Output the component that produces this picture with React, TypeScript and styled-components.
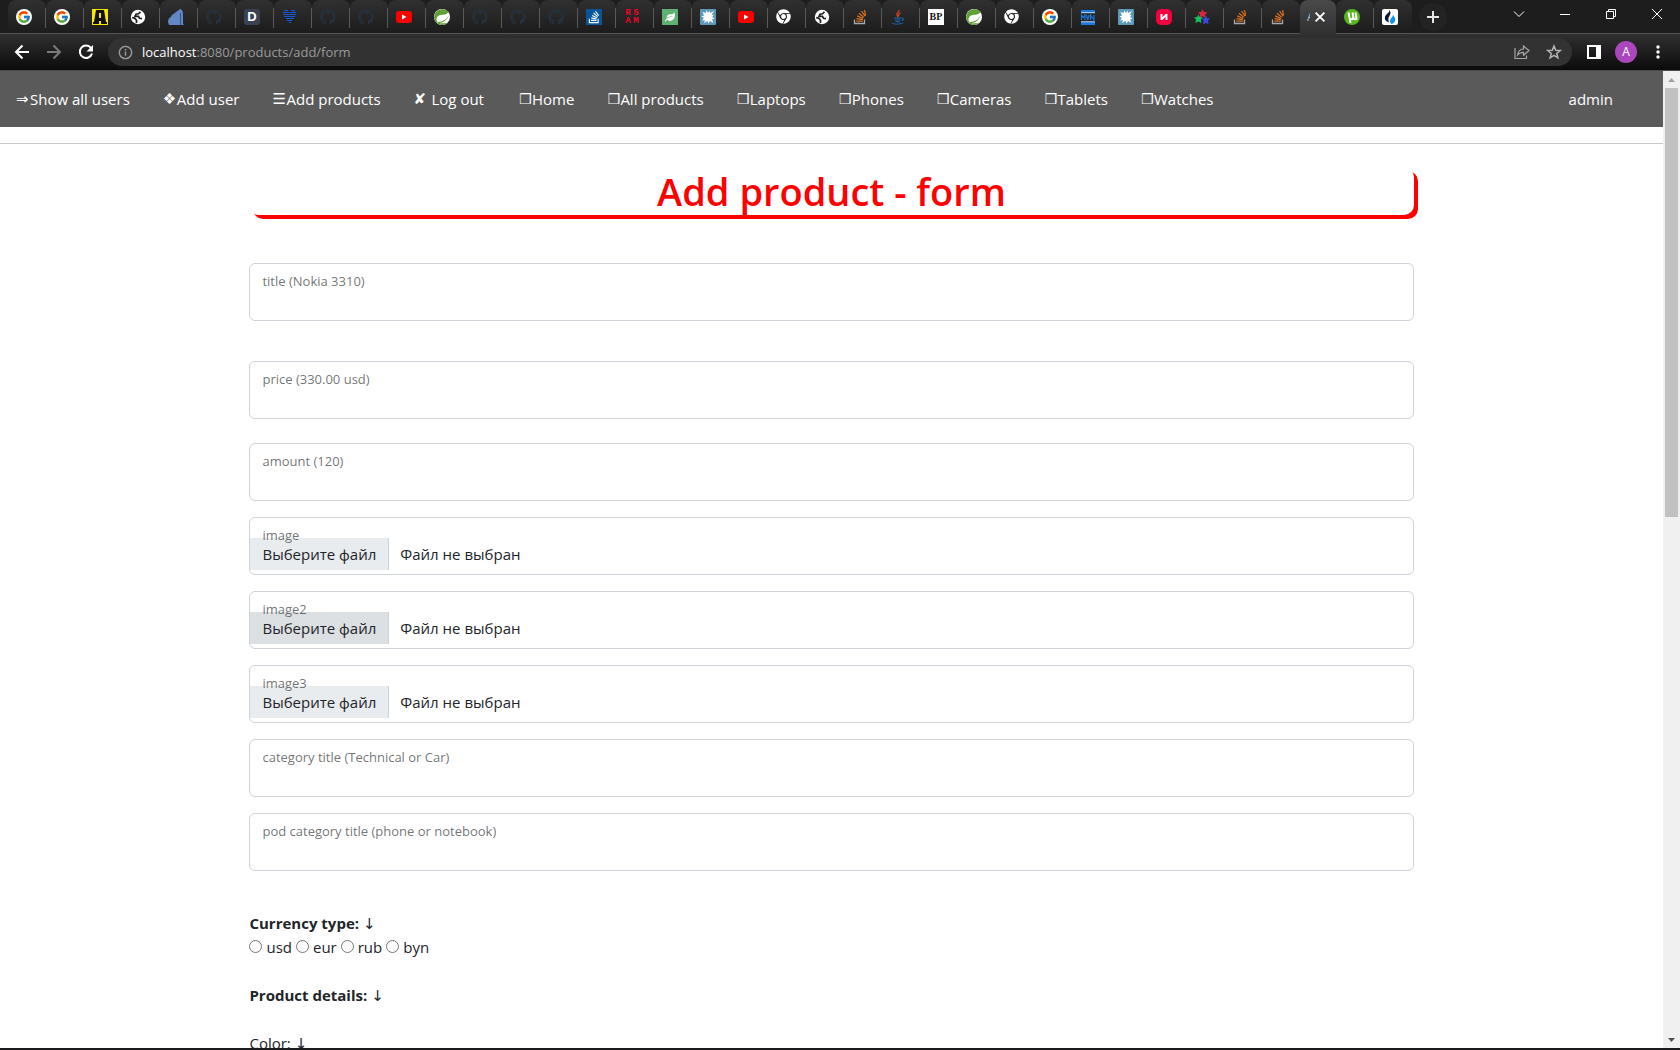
import React, { useRef, useState } from "react";
import styled, { createGlobalStyle } from "styled-components";
import { FcGoogle } from "react-icons/fc";
import { FaGithub, FaStackOverflow, FaChrome, FaLeaf } from "react-icons/fa";
import { SiSpring } from "react-icons/si";

const GlobalStyle = createGlobalStyle`
  *, *::before, *::after { box-sizing: border-box; }
  body {
    margin: 0;
    background: #fff;
    color: #212529;
    font: 400 15px/24px "Open Sans", "Noto Sans", "DejaVu Sans", sans-serif;
  }
  button, input { font: inherit; color: inherit; }
`;

/* ---------- window ---------- */

const Window = styled.div`
  display: flex;
  flex-direction: column;
  height: 100vh;
  border-bottom: 2px solid #1b1b1e;
`;

const TabStrip = styled.header`
  display: flex;
  height: 34px;
  flex: none;
  padding-left: 8px;
  background: #1d1d1d;
  border-bottom: 1px solid #545454;
`;

const Tabs = styled.div`
  display: flex;
  min-width: 0;
`;

const Tab = styled.button<{ $active?: boolean; $line?: boolean }>`
  display: flex;
  align-items: center;
  flex: none;
  width: ${(p) => (p.$active ? 36 : 38)}px;
  height: ${(p) => (p.$active ? 34 : 33)}px;
  padding: 0 0 0 ${(p) => (p.$active ? 7 : 8)}px;
  border: 0;
  border-radius: 8px 8px 0 0;
  background: ${(p) =>
    p.$active
      ? "linear-gradient(#4a4a4a, #303030)"
      : p.$line
      ? "linear-gradient(#5a5a5a, #5a5a5a) right 8px / 1px 20px no-repeat, linear-gradient(#303030, #1c1c1c)"
      : "linear-gradient(#303030, #1c1c1c)"};
  color: #fff;

  svg { display: block; flex: none; }
`;

const TabTitle = styled.span`
  width: 3px;
  overflow: hidden;
  font-size: 12px;
  line-height: 16px;
  color: #9cc4e8;
`;

const Favicon = styled.span<{ $bg?: string; $fg?: string; $size?: number; $radius?: number }>`
  display: grid;
  place-items: center;
  width: 16px;
  height: 16px;
  overflow: hidden;
  border-radius: ${(p) => p.$radius ?? 0}px;
  background: ${(p) => p.$bg ?? "transparent"};
  color: ${(p) => p.$fg ?? "#fff"};
  font: 700 ${(p) => p.$size ?? 12}px/16px "Liberation Sans", Arial, sans-serif;
`;

const PixelWord = styled.span`
  display: grid;
  grid-template-columns: 8px 8px;
  color: #f5002f;
  font: 700 9px/8px "Liberation Mono", monospace;
`;

const SerifIcon = styled(Favicon)`
  font: 700 10px/16px "Liberation Serif", serif;
`;

const RoundButton = styled.button`
  display: grid;
  place-items: center;
  width: 28px;
  height: 28px;
  margin: 3px 0 0 7px;
  padding: 0;
  border: 0;
  border-radius: 50%;
  background: #232323;
  color: #e6e6e6;
`;

const WindowControls = styled.div`
  display: flex;
  margin-left: auto;
`;

const WindowButton = styled.button`
  display: grid;
  place-items: center;
  width: 46px;
  height: 28px;
  padding: 0;
  border: 0;
  background: none;
  color: #fff;
`;

const Toolbar = styled.div`
  display: flex;
  align-items: center;
  flex: none;
  height: 37px;
  padding: 0 6px;
  background: linear-gradient(#303030, #0b0b0b);
  border-bottom: 1px solid #4b4b4b;
`;

const ToolButton = styled.button<{ $dim?: boolean }>`
  display: grid;
  place-items: center;
  width: 32px;
  height: 32px;
  padding: 0;
  border: 0;
  background: none;
  color: ${(p) => (p.$dim ? "#7a7a7a" : "#fff")};
`;

const AddressBar = styled.div`
  display: flex;
  align-items: center;
  flex: 1;
  height: 28px;
  margin: 0 6px;
  padding: 0 2px 0 10px;
  border-radius: 14px;
  background: #323232;
  color: #9a9a9a;
  font-size: 13px;
`;

const Url = styled.span`
  flex: 1;
  margin-left: 9px;

  b { font-weight: 400; color: #fff; }
`;

const Avatar = styled.button`
  width: 22px;
  height: 22px;
  margin: 0 5px;
  padding: 0;
  border: 0;
  border-radius: 50%;
  background: #ab47bc;
  color: #fff;
  font-size: 12px;
  line-height: 22px;
`;

/* ---------- page ---------- */

const Viewport = styled.div`
  display: flex;
  flex: 1;
  min-height: 0;
`;

const Page = styled.div`
  flex: 1;
  min-width: 0;
  overflow: hidden;
`;

const ScrollBar = styled.div`
  display: flex;
  flex-direction: column;
  flex: none;
  width: 17px;
  background: #f0f0f0;
`;

const ScrollArrow = styled.button`
  display: grid;
  place-items: center;
  height: 17px;
  padding: 0;
  border: 0;
  background: none;
`;

const ScrollTrack = styled.div`
  display: flex;
  flex-direction: column;
  flex: 1;
  padding: 0 2px;

  &::after { content: ""; flex: 6; }
`;

const ScrollThumb = styled.div`
  flex: 5;
  background: #c1c1c1;
`;

const NavBar = styled.nav`
  display: flex;
  gap: 2px;
  height: 56px;
  padding-right: 34px;
  background: #5a5a5a;
`;

const NavGroup = styled.div<{ $end?: boolean }>`
  display: flex;
  margin-left: ${(p) => (p.$end ? "auto" : 0)};
`;

const NavLink = styled.a<{ $last?: boolean }>`
  display: flex;
  align-items: center;
  padding: 0 ${(p) => (p.$last ? 16 : 17)}px 0 16px;
  color: #fff;
  text-decoration: none;
  white-space: pre;
`;

const Glyph = styled.span<{ $box?: boolean }>`
  width: ${(p) => (p.$box ? 13 : 14)}px;
  font-family: "DejaVu Sans", sans-serif;
  font-size: ${(p) => (p.$box ? 14 : 15)}px;
`;

const Rule = styled.hr`
  margin: 16px 0 23px;
  border: 0;
  border-top: 1px solid #c8c9ca;
`;

const Main = styled.main`
  padding: 0 15%;
`;

const Title = styled.h1`
  margin: 0 0 48px;
  border-radius: 10px;
  box-shadow: 4px 4px 0 red;
  color: red;
  font-size: 38px;
  font-weight: 600;
  line-height: 48px;
  text-align: center;
`;

const Form = styled.form`
  display: flex;
  flex-direction: column;
`;

const Field = styled.div<{ $after?: number }>`
  position: relative;
  display: flex;
  align-items: flex-end;
  height: 58px;
  margin-bottom: ${(p) => p.$after ?? 16}px;
  border: 1px solid #ced4da;
  border-radius: 6px;
`;

const FieldLabel = styled.label`
  position: absolute;
  top: 7px;
  left: 12px;
  color: rgba(33, 37, 41, 0.65);
  font-size: 13px;
  line-height: 20px;
  pointer-events: none;
`;

const TextInput = styled.input`
  width: 100%;
  height: 100%;
  padding: 26px 12px 10px;
  border: 0;
  border-radius: 6px;
  outline: 0;
  background: transparent;
`;

const HiddenFile = styled.input`
  position: absolute;
  width: 1px;
  height: 1px;
  opacity: 0;
`;

const PickButton = styled.button<{ $hover?: boolean }>`
  height: 32px;
  margin-bottom: 4px;
  padding: 2px 12px;
  border: 0;
  border-right: 1px solid #ced4da;
  background: ${(p) => (p.$hover ? "#dde0e3" : "#e9ecef")};
`;

const FileStatus = styled.span`
  margin-bottom: 4px;
  padding: 4px 11px;
`;

const Heading = styled.div`
  margin-top: 24px;
`;

const RadioRow = styled.div`
  display: flex;
  gap: 4px;
`;

const RadioLabel = styled.label`
  display: flex;
  align-items: center;
  gap: 4px;

  input { width: 13px; height: 13px; margin: 0 0 2px; }
`;

/* ---------- icons ---------- */

const Stroke = ({ d, size = 16, w = 2 }: { d: string; size?: number; w?: number }) => (
  <svg width={size} height={size} viewBox="0 0 16 16" fill="none" stroke="currentColor" strokeWidth={w}>
    <path d={d} />
  </svg>
);

const GoogleIcon = () => (
  <Favicon $bg="#fff" $radius={8}>
    <FcGoogle size={14} />
  </Favicon>
);
const GithubIcon = () => <FaGithub size={16} color="#25303a" />;
const SpringIcon = () => (
  <Favicon $bg="#fff" $radius={8}>
    <SiSpring size={17} color="#5fa134" />
  </Favicon>
);
const YoutubeIcon = () => (
  <svg width="16" height="16" viewBox="0 0 16 16">
    <rect y="2" width="16" height="12" rx="3" fill="#f00" />
    <path d="M6 5.5 10.5 8 6 10.5z" fill="#fff" />
  </svg>
);
const GlobeIcon = () => (
  <svg width="16" height="16" viewBox="0 0 16 16">
    <circle cx="8" cy="8" r="7.200" fill="#fff" />
    <path d="M10.500 2.800 8.500 4.800 6 5.200 5 7.300H8.500L9.500 9.300 12 9.600M2.200 8.500 5 9.500 6.500 11.300V14" fill="none" stroke="#1f1f1f" strokeWidth="1.700" />
  </svg>
);
const ChromeIcon = () => <FaChrome size={15} color="#fff" />;
const StackIcon = () => (
  <svg width="16" height="16" viewBox="0 0 16 16" fill="none">
    <path d="M2.500 10.500v4h10v-4" stroke="#a5a9ad" strokeWidth="1.300" />
    <path d="M4.300 12.200h6.400M4.500 9.600l6.300 1.100M5.200 6.900l5.900 2.600M7 4.200l4.800 4.200M9.600 2l3.400 5.300M12.600 1l.9 5.600" stroke="#e2731c" strokeWidth="1.200" />
  </svg>
);
const BurstIcon = () => (
  <Favicon $bg="#5c9ab8" $radius={1}>
    <svg width="16" height="16" viewBox="0 0 16 16">
      <path
        d="M8 4 9.500 1.500 10 4 14 2 11.800 5.500 13.500 6.500 12 8 14.500 9.500 12 10.500 13.500 14 10 12 8.500 14.500 7.500 12 4 14 5 11 2 11.500 4 9 1.500 7.500 4 6.500 2.500 3 5.500 4 6.500 1.500z"
        fill="#fff"
      />
    </svg>
  </Favicon>
);

const favicons: { name: string; icon: React.ReactNode }[] = [
  { name: "Google", icon: <GoogleIcon /> },
  { name: "Google", icon: <GoogleIcon /> },
  {
    name: "A",
    icon: (
      <Favicon $bg="#f8e800">
        <svg width="16" height="16" viewBox="0 0 16 16">
          <path d="M4 1h8l2 12h1v2H9v-3H7v3H1v-2h1zM7 4v5h2V4z" fill="#111" fillRule="evenodd" />
        </svg>
      </Favicon>
    ),
  },
  { name: "Site", icon: <GlobeIcon /> },
  {
    name: "Postgres",
    icon: (
      <svg width="16" height="16" viewBox="0 0 16 16">
        <path d="M0 13c0-3 1-4 3-5 0-2 3-3 5-5l4-3 2 1 1 3v11l1 1H1z" fill="#6287c4" />
        <path d="M12.500 4v12" stroke="#2c4470" strokeWidth=".8" />
      </svg>
    ),
  },
  { name: "GitHub", icon: <GithubIcon /> },
  { name: "D", icon: <Favicon $bg="#3a4252" $size={13} $radius={3}>D</Favicon> },
  {
    name: "Heart",
    icon: (
      <svg width="16" height="16" viewBox="0 0 16 16">
        <path d="M2 1.500h4M9 1.500h4M1 3.500h6M8 3.500h6M1 5.500h13M2 7.500h11M4 9.500h8M5 11.500h5M7 13.500h2" stroke="#1558d6" />
      </svg>
    ),
  },
  { name: "GitHub", icon: <GithubIcon /> },
  { name: "GitHub", icon: <GithubIcon /> },
  { name: "YouTube", icon: <YoutubeIcon /> },
  { name: "Spring", icon: <SpringIcon /> },
  { name: "GitHub", icon: <GithubIcon /> },
  { name: "GitHub", icon: <GithubIcon /> },
  { name: "GitHub", icon: <GithubIcon /> },
  { name: "Stack Overflow", icon: <Favicon $bg="#07569c"><FaStackOverflow size={14} /></Favicon> },
  {
    name: "R5AM",
    icon: (
      <PixelWord>
        <span>R</span>
        <span>5</span>
        <span>A</span>
        <span>M</span>
      </PixelWord>
    ),
  },
  { name: "Leaf", icon: <Favicon $bg="#5fb073"><FaLeaf size={10} /></Favicon> },
  { name: "Baeldung", icon: <BurstIcon /> },
  { name: "YouTube", icon: <YoutubeIcon /> },
  { name: "Chrome", icon: <ChromeIcon /> },
  { name: "Site", icon: <GlobeIcon /> },
  { name: "Stack Overflow", icon: <StackIcon /> },
  {
    name: "Java",
    icon: (
      <svg width="16" height="16" viewBox="0 0 16 16" fill="none">
        <path d="M9 1c1 2-3.500 3-2 5 .6.800 1.200 1.500.8 2.600M10.500 4C8.500 5 8.200 6 9 7.200" stroke="#e2431e" strokeWidth="1.200" />
        <path d="M4 9.200h7.500M4.500 11h6M5.500 12.700h4.500M2 14.200c3 1 8 1 11-.2M12 9.500c2-.6 2 1.500-.2 2.200" stroke="#1d5a9c" strokeWidth="1.200" />
      </svg>
    ),
  },
  { name: "BP", icon: <SerifIcon $bg="#fff" $fg="#111">BP</SerifIcon> },
  { name: "Spring", icon: <SpringIcon /> },
  { name: "Chrome", icon: <ChromeIcon /> },
  { name: "Google", icon: <GoogleIcon /> },
  {
    name: "MVN",
    icon: (
      <svg width="16" height="16" viewBox="0 0 16 16">
        <path d="M1 1h14v3H1zM1 12.500h14V16H1z" fill="#1b7ae0" />
        <path d="M1 3.700h14M1 12.800h14" stroke="#e8f1fb" strokeWidth=".8" />
        <path d="M1.500 11V6l1.700 2.500L5 6v5M6.500 6l1.200 5L9 6M10.500 11V6l3.500 5V6" fill="none" stroke="#1b7ae0" strokeWidth="1.100" />
      </svg>
    ),
  },
  { name: "Baeldung", icon: <BurstIcon /> },
  {
    name: "Habr",
    icon: (
      <svg width="16" height="16" viewBox="0 0 16 16">
        <rect width="16" height="16" rx="5" fill="#f5003d" />
        <path d="M5.500 5v6M5.500 10.500l5-5M10.500 5v6" fill="none" stroke="#fff" strokeWidth="1.900" />
      </svg>
    ),
  },
  {
    name: "Stars",
    icon: (
      <svg width="16" height="16" viewBox="0 0 16 16">
        <path d="M8.500 0l1.400 3 3.600.3-2.500 2.400.8 3.300-3.300-1.700L5.500 9l.6-3.300L4 3.300 7.200 3z" fill="#d7263d" />
        <path d="M4.500 5.500l1.300 2.600 3 .3-2 2.200.6 3.400-3-1.600-3 1.600.6-3.400L0 8.400l3.200-.3z" fill="#10c45c" />
        <path d="M12 6.500l1.200 2.700 2.800.3-2 2.200.6 3.800-2.800-1.700L9 15.500l.6-3.800L7.600 9.500l3-.3z" fill="#3b4be0" />
      </svg>
    ),
  },
  { name: "Stack Overflow", icon: <StackIcon /> },
  { name: "Stack Overflow", icon: <StackIcon /> },
];

const tailFavicons: { name: string; icon: React.ReactNode }[] = [
  {
    name: "Torrent",
    icon: (
      <svg width="16" height="16" viewBox="0 0 16 16">
        <circle cx="8" cy="8" r="8" fill="#55b51c" />
        <path d="M4.500 3.500 6.500 14M5.500 9c.8 2.200 4 1.500 3.800-1L8.500 3.500M9.200 8.500c.6 2 2.600 2.200 4 1M12.500 9.500 11.500 3.500" fill="none" stroke="#fff" strokeWidth="2" />
      </svg>
    ),
  },
  {
    name: "Huobi",
    icon: (
      <Favicon $bg="#fff" $radius={2}>
        <svg width="16" height="16" viewBox="0 0 16 16">
          <path d="M7.500 1c1.800 3 .8 4.500-.2 6-1.200 2-1.200 4-.3 6.500C2.500 12 2 8.500 4 6c1.500-1.800 3.500-2.500 3.500-5z" fill="#0b1340" />
          <path d="M11 5.500c.3 1.600 2.300 2.500 2.300 5 0 2.300-1.600 4-4 4.500-2-2.500-1.500-4.500 0-6 1-1 1.700-1.800 1.700-3.500z" fill="#1292e8" />
        </svg>
      </Favicon>
    ),
  },
];

const accountLinks: [string, string][] = [
  ["⇒", "Show all users"],
  ["❖", "Add user"],
  ["☰", "Add products"],
  ["✘", " Log out"],
];

const catalogueLinks = ["Home", "All products", "Laptops", "Phones", "Cameras", "Tablets", "Watches"];

/* ---------- parts ---------- */

function TextField({ id, label, after }: { id: string; label: string; after?: number }) {
  return (
    <Field $after={after}>
      <TextInput id={id} name={id} type="text" />
      <FieldLabel htmlFor={id}>{label}</FieldLabel>
    </Field>
  );
}

function FileField({ id, hover }: { id: string; hover?: boolean }) {
  const input = useRef<HTMLInputElement>(null);
  const [file, setFile] = useState("Файл не выбран");
  return (
    <Field>
      <HiddenFile
        ref={input}
        id={id}
        name={id}
        type="file"
        tabIndex={-1}
        onChange={(e) => setFile(e.target.files?.[0]?.name ?? "Файл не выбран")}
      />
      <PickButton type="button" $hover={hover} onClick={() => input.current?.click()}>
        Выберите файл
      </PickButton>
      <FileStatus>{file}</FileStatus>
      <FieldLabel htmlFor={id}>{id}</FieldLabel>
    </Field>
  );
}

function BrowserChrome() {
  return (
    <>
      <TabStrip>
        <Tabs>
          {favicons.map((f, i) => (
            <Tab key={i} aria-label={f.name} $line={i < favicons.length - 1}>
              {f.icon}
            </Tab>
          ))}
          <Tab $active aria-label="Add product">
            <TabTitle>A</TabTitle>
            <Stroke d="M4.500 4.500l7 7M11.500 4.500l-7 7" size={20} w={1.5} />
          </Tab>
          {tailFavicons.map((f, i) => (
            <Tab key={i} aria-label={f.name} $line={i === 0}>
              {f.icon}
            </Tab>
          ))}
        </Tabs>
        <RoundButton aria-label="New tab">
          <Stroke d="M8 2v12M2 8h12" size={16} />
        </RoundButton>
        <WindowControls>
          <WindowButton aria-label="Search tabs"><Stroke d="M3 5.500l5 5 5-5" w={1} /></WindowButton>
          <WindowButton aria-label="Minimize"><Stroke d="M3 8.500h10" w={1} /></WindowButton>
          <WindowButton aria-label="Restore"><Stroke d="M3.500 5.500h7v7h-7zM5.500 5.500v-2h7v7h-2" w={1} /></WindowButton>
          <WindowButton aria-label="Close"><Stroke d="M3 3l10 10M13 3L3 13" w={1} /></WindowButton>
        </WindowControls>
      </TabStrip>
      <Toolbar>
        <ToolButton aria-label="Back"><Stroke d="M15 8H2.500M8.500 1.500L2 8l6.500 6.500" /></ToolButton>
        <ToolButton aria-label="Forward" $dim><Stroke d="M1 8h12.500M7.500 1.500L14 8l-6.500 6.500" /></ToolButton>
        <ToolButton aria-label="Reload">
          <svg width="16" height="16" viewBox="0 0 16 16">
            <path d="M13 4A6.200 6.200 0 1 0 14 9.500" fill="none" stroke="currentColor" strokeWidth="2" />
            <path d="M15 1v6.500H8.500z" fill="currentColor" />
          </svg>
        </ToolButton>
        <AddressBar>
          <Stroke d="M8 1.500a6.500 6.500 0 1 0 .01 0zM8 7v4.500M8 4.200v1.600" w={1.5} size={15} />
          <Url><b>localhost</b>:8080/products/add/form</Url>
          <ToolButton aria-label="Share" $dim>
            <svg width="16" height="16" viewBox="0 0 16 16" fill="none" stroke="#a6a6a6" strokeWidth="1.200">
              <path d="M1 4v10.500h11.500v-3M9.500 2v3C6 5.300 4 7.500 3.700 11 5.200 9 7 8.300 9.500 8.300v3L15 6.500z" />
            </svg>
          </ToolButton>
          <ToolButton aria-label="Bookmark" $dim>
            <svg width="16" height="16" viewBox="0 0 16 16" fill="none" stroke="#b4b4b4" strokeWidth="1.500">
              <path d="M8 2l1.700 4.200 4.500.3-3.500 2.900 1.200 4.400L8 11.400l-3.900 2.400 1.200-4.400L1.800 6.500l4.500-.3z" />
            </svg>
          </ToolButton>
        </AddressBar>
        <ToolButton aria-label="Side panel">
          <svg width="14" height="14" viewBox="0 0 14 14">
            <path d="M0 0h14v14H0zM2 2v10h7V2z" fill="#fff" fillRule="evenodd" />
          </svg>
        </ToolButton>
        <Avatar>A</Avatar>
        <ToolButton aria-label="Menu">
          <svg width="16" height="16" viewBox="0 0 16 16" fill="#fff">
            <circle cx="8" cy="3" r="1.700" /><circle cx="8" cy="8" r="1.700" /><circle cx="8" cy="13" r="1.700" />
          </svg>
        </ToolButton>
      </Toolbar>
    </>
  );
}

export default function App() {
  return (
    <Window>
      <GlobalStyle />
      <BrowserChrome />
      <Viewport>
        <Page>
          <NavBar>
            <NavGroup>
              {accountLinks.map(([glyph, text]) => (
                <NavLink key={text} href="#">
                  <Glyph>{glyph}</Glyph>
                  {text}
                </NavLink>
              ))}
            </NavGroup>
            <NavGroup>
              {catalogueLinks.map((text) => (
                <NavLink key={text} href="#">
                  <Glyph $box>❒</Glyph>
                  {text}
                </NavLink>
              ))}
            </NavGroup>
            <NavGroup $end>
              <NavLink href="#" $last>admin</NavLink>
            </NavGroup>
          </NavBar>
          <Rule />
          <Main>
            <Title>Add product - form</Title>
            <Form>
              <TextField id="title" label="title (Nokia 3310)" after={40} />
              <TextField id="price" label="price (330.00 usd)" after={24} />
              <TextField id="amount" label="amount (120)" />
              <FileField id="image" />
              <FileField id="image2" hover />
              <FileField id="image3" />
              <TextField id="category" label="category title (Technical or Car)" />
              <TextField id="podCategory" label="pod category title (phone or notebook)" />
              <Heading><strong>Currency type:</strong> ↓</Heading>
              <RadioRow>
                {["usd", "eur", "rub", "byn"].map((c) => (
                  <RadioLabel key={c}>
                    <input type="radio" name="currency" value={c} />
                    {c}
                  </RadioLabel>
                ))}
              </RadioRow>
              <Heading><strong>Product details:</strong> ↓</Heading>
              <Heading>Color: ↓</Heading>
            </Form>
          </Main>
        </Page>
        <ScrollBar>
          <ScrollArrow aria-label="Scroll up">
            <svg width="7" height="4" viewBox="0 0 7 4"><path d="M0 4 3.500 0 7 4z" fill="#a3a3a3" /></svg>
          </ScrollArrow>
          <ScrollTrack><ScrollThumb /></ScrollTrack>
          <ScrollArrow aria-label="Scroll down">
            <svg width="7" height="4" viewBox="0 0 7 4"><path d="M0 0h7L3.500 4z" fill="#505050" /></svg>
          </ScrollArrow>
        </ScrollBar>
      </Viewport>
    </Window>
  );
}
